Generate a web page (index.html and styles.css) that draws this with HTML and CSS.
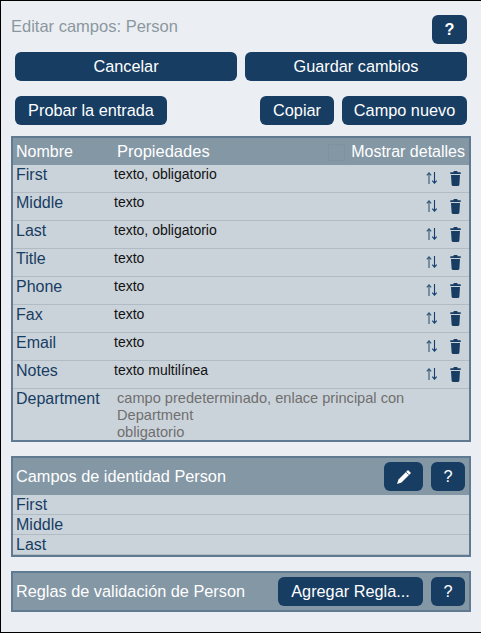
FILE: index.html
```html
<!DOCTYPE html>
<html lang="en">
<head>
    <meta charset="UTF-8">
    <meta name="viewport" content="width=device-width, initial-scale=1.0">
    <title>Editar campos: Person</title>
    <link rel="stylesheet" href="styles.css">
</head>
<body>
    <svg width="0" height="0" class="defs">
        <symbol id="swap" viewBox="0 0 12 12">
            <path d="M3 12V1M.8 3.400 3 .8l2.200 2.600" fill="none" stroke="#33587c" stroke-width="1.100"/>
            <path d="M8.500 0v11M6.300 8.600 8.500 11.200l2.200-2.600" fill="none" stroke="#123f70" stroke-width="1.100"/>
        </symbol>
        <symbol id="trash" viewBox="0 0 11 15">
            <path d="M3.800 0h3.400l.5 1.300h3V3H.3V1.300h3zM1 4h9l-.6 9.500q-.1 1.500-1.600 1.500H3.200q-1.500 0-1.600-1.500z" fill="#183d63"/>
        </symbol>
    </svg>

    <div class="dialog">
        <div class="title-row">
            <span class="title">Editar campos: Person</span>
            <button class="btn help bold">?</button>
        </div>

        <div class="actions">
            <button class="btn">Cancelar</button>
            <button class="btn">Guardar cambios</button>
        </div>

        <div class="tools">
            <button class="btn test">Probar la entrada</button>
            <span class="spacer"></span>
            <button class="btn copy">Copiar</button>
            <button class="btn new">Campo nuevo</button>
        </div>

        <div class="panel fields">
            <div class="fields-head">
                <span class="col-name">Nombre</span>
                <span class="col-props">Propiedades</span>
                <span class="check"></span>
                <span>Mostrar detalles</span>
            </div>
            <div class="field"><span class="col-name">First</span><span class="props">texto, obligatorio</span><svg class="swap"><use href="#swap"/></svg><svg class="trash"><use href="#trash"/></svg></div>
            <div class="field"><span class="col-name">Middle</span><span class="props">texto</span><svg class="swap"><use href="#swap"/></svg><svg class="trash"><use href="#trash"/></svg></div>
            <div class="field"><span class="col-name">Last</span><span class="props">texto, obligatorio</span><svg class="swap"><use href="#swap"/></svg><svg class="trash"><use href="#trash"/></svg></div>
            <div class="field"><span class="col-name">Title</span><span class="props">texto</span><svg class="swap"><use href="#swap"/></svg><svg class="trash"><use href="#trash"/></svg></div>
            <div class="field"><span class="col-name">Phone</span><span class="props">texto</span><svg class="swap"><use href="#swap"/></svg><svg class="trash"><use href="#trash"/></svg></div>
            <div class="field"><span class="col-name">Fax</span><span class="props">texto</span><svg class="swap"><use href="#swap"/></svg><svg class="trash"><use href="#trash"/></svg></div>
            <div class="field"><span class="col-name">Email</span><span class="props">texto</span><svg class="swap"><use href="#swap"/></svg><svg class="trash"><use href="#trash"/></svg></div>
            <div class="field"><span class="col-name">Notes</span><span class="props">texto multilínea</span><svg class="swap"><use href="#swap"/></svg><svg class="trash"><use href="#trash"/></svg></div>
            <div class="field linked">
                <span class="col-name">Department</span>
                <span class="props-linked">campo predeterminado, enlace principal con Department<br>obligatorio</span>
            </div>
        </div>

        <div class="panel identity">
            <div class="panel-head">
                <span class="grow">Campos de identidad Person</span>
                <button class="btn edit">
                    <svg width="16" height="16" viewBox="0 0 16 16"><path d="M12 1 15 4 5.500 13.500 1 15l1.500-4.500z" fill="#fff"/><path d="M10.300 3.200 12.800 5.700" stroke="#173d63" stroke-width=".8"/></svg>
                </button>
                <button class="btn help-sm">?</button>
            </div>
            <div class="ident">First</div>
            <div class="ident">Middle</div>
            <div class="ident">Last</div>
        </div>

        <div class="panel rules">
            <div class="panel-head">
                <span class="grow">Reglas de validación de Person</span>
                <button class="btn add">Agregar Regla...</button>
                <button class="btn help-sm">?</button>
            </div>
        </div>
    </div>
</body>
</html>
```

FILE: styles.css
```css
* {
    box-sizing: border-box;
}
body {
    margin: 0;
    font-family: "Liberation Sans", Arial, sans-serif;
    font-size: 16px;
    background: #ebeff3;
}
.defs {
    display: block;
    height: 0;
}
.dialog {
    width: 481px;
    height: 633px;
    border: 1px solid #000;
    border-right: 0;
    padding: 0 10px;
}
.btn {
    height: 29px;
    padding: 0;
    border: none;
    border-radius: 6px;
    background: #173d63;
    color: #fff;
    font-family: inherit;
    font-size: 16.3px;
    white-space: nowrap;
}
.bold {
    font-weight: bold;
}
.title-row {
    display: flex;
    justify-content: space-between;
    height: 51px;
    padding: 14px 4px 0 0;
}
.title {
    color: #8b979f;
    font-size: 16.5px;
    margin-top: 2px;
}
.help {
    width: 35px;
}
.actions {
    display: grid;
    grid-template-columns: 222px 222px;
    gap: 8px;
    padding-left: 4px;
}
.tools {
    display: flex;
    gap: 8px;
    margin-top: 15px;
    padding: 0 4px;
}
.spacer {
    flex: 1;
}
.test {
    width: 152px;
}
.copy {
    width: 74px;
}
.new {
    width: 125px;
}
.panel {
    width: 460px;
    border: 2px solid #5f7a91;
    background: #cbd3da;
}
.fields {
    margin-top: 11px;
    height: 306px;
}
.fields-head {
    display: flex;
    align-items: center;
    height: 27px;
    padding: 1px 4px 0 3px;
    background: #8497a5;
    color: #fff;
}
.col-name {
    flex: none;
    width: 101px;
}
.col-props {
    flex: 1;
    margin-top: -2px;
    font-size: 16.5px;
}
.check {
    width: 17px;
    height: 17px;
    margin-right: 6px;
    border: 1px solid #7f929f;
}
.field {
    display: flex;
    height: 28px;
    padding-left: 3px;
    border-bottom: 1px solid #b0bbc3;
    color: #173d63;
}
.field .col-name {
    margin-top: 1px;
}
.props {
    flex: 1;
    margin-top: 1px;
    margin-left: -3px;
    color: #111;
    font-size: 14px;
}
.swap {
    width: 12px;
    height: 12px;
    margin-top: 7px;
}
.trash {
    width: 11px;
    height: 15px;
    margin: 6px 8px 0 12px;
}
.linked {
    height: 51px;
    border-bottom: 0;
}
.props-linked {
    flex: 1;
    padding: 1px 40px 0 0;
    color: #6f6f6f;
    font-size: 14.6px;
    line-height: 17px;
}
.identity {
    margin-top: 14px;
}
.panel-head {
    display: flex;
    align-items: center;
    gap: 8px;
    height: 37px;
    padding: 0 4px 0 3px;
    background: #8497a5;
    color: #fff;
    font-size: 16.3px;
}
.grow {
    flex: 1;
}
.edit {
    width: 39px;
    display: flex;
    align-items: center;
    justify-content: center;
}
.help-sm {
    width: 34px;
}
.add {
    width: 145px;
}
.ident {
    height: 20px;
    padding-left: 3px;
    line-height: 19px;
    color: #173d63;
    border-bottom: 1px solid #b0bbc3;
}
.rules {
    margin-top: 14px;
}
```
